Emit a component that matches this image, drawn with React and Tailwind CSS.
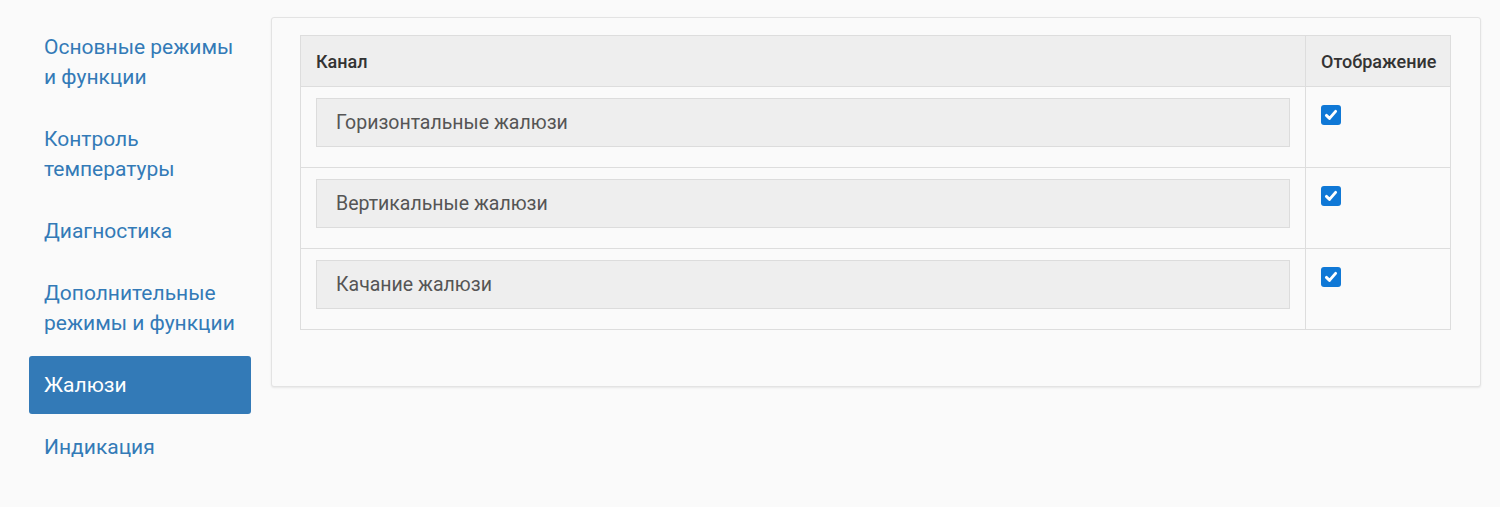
import React from "react";

const navItems = [
  { label: ["Основные режимы", "и функции"] },
  { label: ["Контроль", "температуры"] },
  { label: ["Диагностика"] },
  { label: ["Дополнительные", "режимы и функции"] },
  { label: ["Жалюзи"], active: true },
  { label: ["Индикация"] },
];

const rows = ["Горизонтальные жалюзи", "Вертикальные жалюзи", "Качание жалюзи"];

function Check() {
  return (
    <div className="w-[20px] h-[20px] rounded-[3px] bg-[#0f78d6] flex items-center justify-center">
      <svg width="14" height="14" viewBox="0 0 14 14" fill="none">
        <path d="M2.4 7.4 L5.5 10.4 L11.6 3.4" stroke="white" strokeWidth="2.9" strokeLinecap="round" strokeLinejoin="round" />
      </svg>
    </div>
  );
}

export default function App() {
  return (
    <div
      className="bg-[#fafafa] h-[507px] flex items-start pl-[29px] pt-[17px] gap-[20px]"
      style={{ fontFamily: "Roboto, 'Noto Sans', sans-serif" }}
    >
      <nav className="w-[222px] flex flex-col gap-[4px] pt-[1px]">
        {navItems.map((item, i) => (
          <div
            key={i}
            className={
              "px-[15px] py-[14px] rounded-[3px] text-[21px] leading-[30px] " +
              (item.active ? "bg-[#337ab7] text-white" : "text-[#337ab7]")
            }
          >
            {item.label.map((l, j) => (
              <div key={j}>{l}</div>
            ))}
          </div>
        ))}
      </nav>
      <div className="w-[1210px] h-[370px] border border-[#e3e3e3] rounded-[3px] bg-[#fafafa] shadow-[0_1px_2px_rgba(0,0,0,0.08)] px-[28px] pt-[17px]">
        <table className="w-[1151px] border-collapse border border-[#dddddd]">
          <thead>
            <tr className="bg-[#eeeeee] h-[51px]">
              <th className="text-left font-medium text-[18px] text-[#333] pl-[15px] border border-[#dddddd] w-[1005px]">
                Канал
              </th>
              <th className="text-left font-medium text-[18px] text-[#333] pl-[15px] border border-[#dddddd]">
                Отображение
              </th>
            </tr>
          </thead>
          <tbody>
            {rows.map((r) => (
              <tr key={r} className="h-[81px]">
                <td className="border border-[#dddddd] align-top px-[15px] pt-[11px] pb-[20px]">
                  <div className="h-[49px] bg-[#eeeeee] border border-[#dcdcdc] flex items-center px-[19px] text-[19.5px] text-[#555]">
                    {r}
                  </div>
                </td>
                <td className="border border-[#dddddd] align-top pl-[15px] pt-[18px]">
                  <Check />
                </td>
              </tr>
            ))}
          </tbody>
        </table>
      </div>
    </div>
  );
}
